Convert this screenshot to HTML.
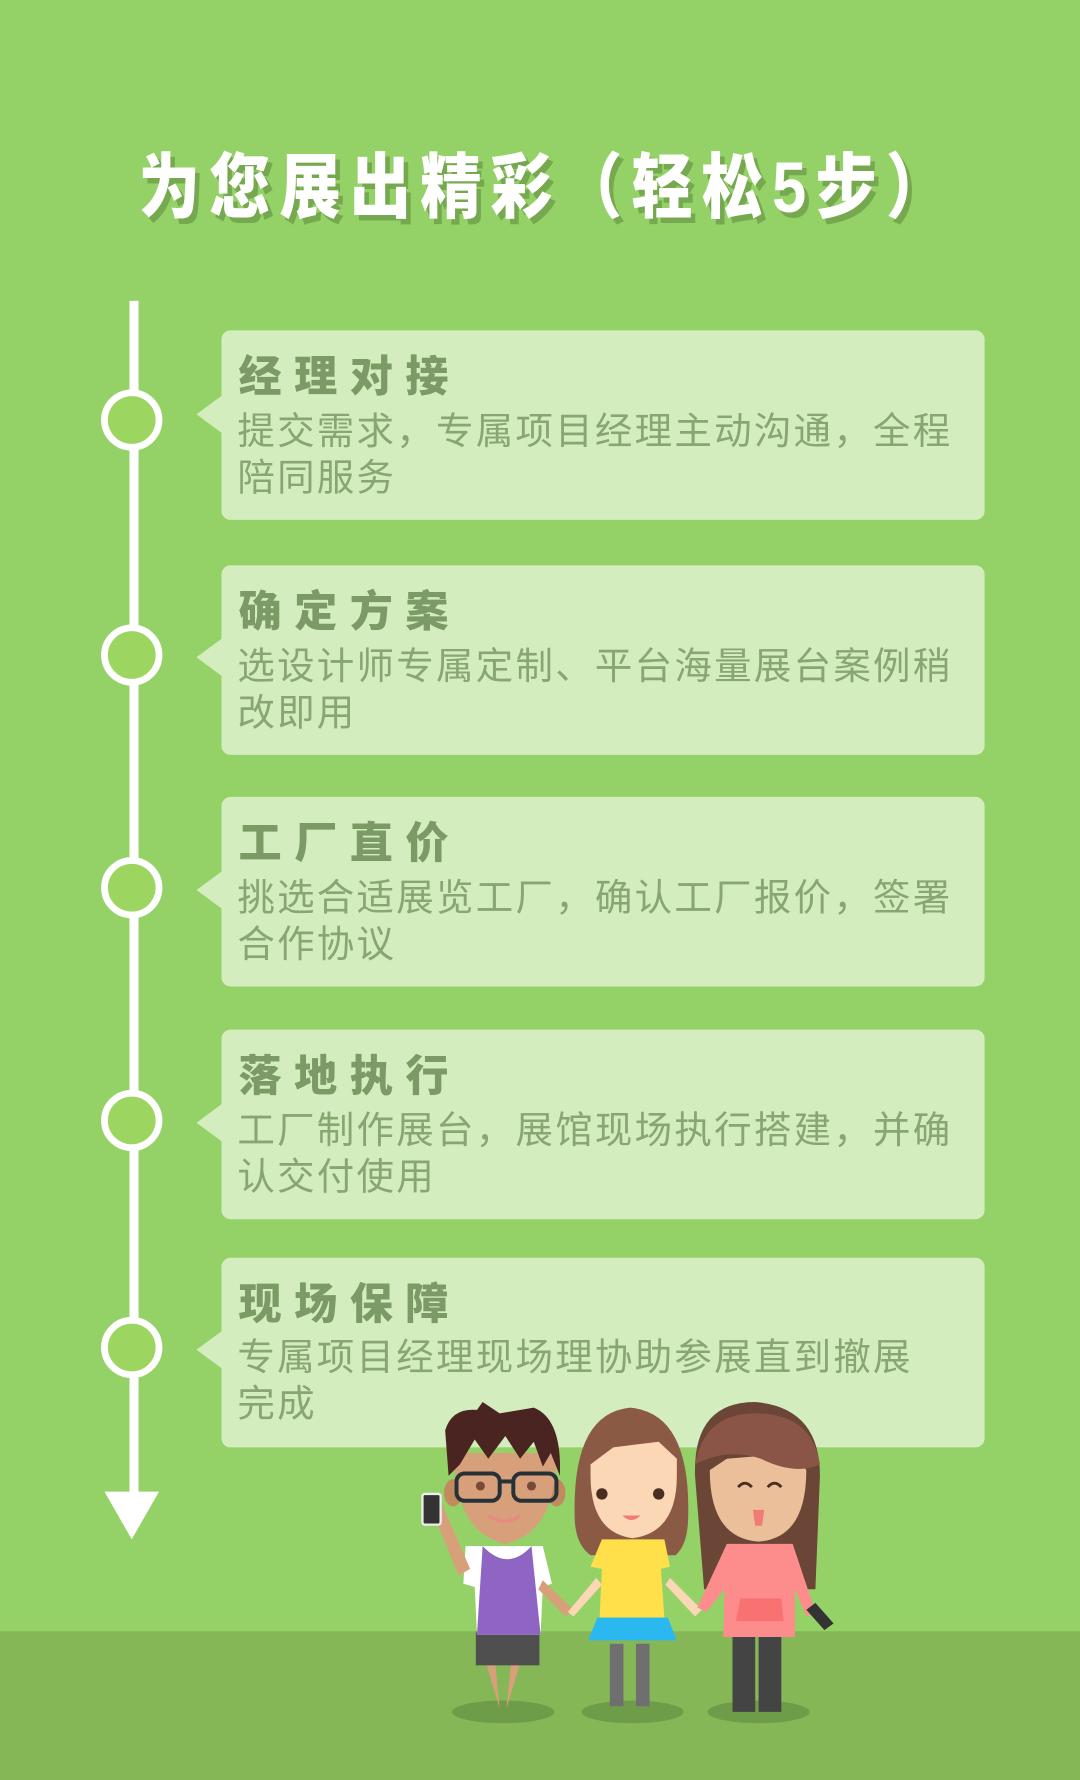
<!DOCTYPE html>
<html><head><meta charset="utf-8"><style>
html,body{margin:0;padding:0;background:#94d268;}
svg{display:block}
text{font-family:"Liberation Sans","Noto Sans CJK SC",sans-serif;}
</style></head><body>
<svg width="1080" height="1780" viewBox="0 0 951 1568" preserveAspectRatio="none" xmlns="http://www.w3.org/2000/svg">
<rect width="951" height="1568" fill="#94d268"/>
<rect y="1437" width="951" height="131" fill="#86b757"/>
<!-- title -->
<g font-size="54" font-weight="900" text-anchor="middle" letter-spacing="8">
<text x="486" y="191" fill="#76a94f" transform="translate(0,-30) scale(1,1.16)">为您展出精彩（轻松5步）</text>
<text x="482" y="187" fill="#ffffff" transform="translate(0,-30) scale(1,1.16)">为您展出精彩（轻松5步）</text>
</g>
<!-- timeline -->
<rect x="114" y="265" width="8" height="1055" fill="#fff"/>
<polygon points="92,1314 140,1314 116,1356" fill="#fff"/>
<g fill="#9dd561" stroke="#fff" stroke-width="6">
<circle cx="116" cy="370" r="24"/>
<circle cx="116" cy="577" r="24"/>
<circle cx="116" cy="782" r="24"/>
<circle cx="116" cy="987" r="24"/>
<circle cx="116" cy="1187" r="24"/>
</g>
<!-- cards -->
<g fill="#d3edbe">
<rect x="195" y="291" width="672" height="167" rx="8"/><polygon points="196,348 173,365 196,382"/>
<rect x="195" y="498" width="672" height="167" rx="8"/><polygon points="196,562 173,579 196,596"/>
<rect x="195" y="702" width="672" height="167" rx="8"/><polygon points="196,767 173,784 196,801"/>
<rect x="195" y="907" width="672" height="167" rx="8"/><polygon points="196,972 173,989 196,1006"/>
<rect x="195" y="1108" width="672" height="167" rx="8"/><polygon points="196,1172 173,1189 196,1206"/>
</g>
<g font-size="38" font-weight="900" fill="#7b9a65" letter-spacing="11">
<text x="210" y="345">经理对接</text>
<text x="210" y="552">确定方案</text>
<text x="210" y="756">工厂直价</text>
<text x="210" y="961">落地执行</text>
<text x="210" y="1162">现场保障</text>
</g>
<g font-size="33" fill="#88a672" letter-spacing="2">
<text x="209" y="391">提交需求，专属项目经理主动沟通，全程</text>
<text x="209" y="432">陪同服务</text>
<text x="209" y="598">选设计师专属定制、平台海量展台案例稍</text>
<text x="209" y="639">改即用</text>
<text x="209" y="802">挑选合适展览工厂，确认工厂报价，签署</text>
<text x="209" y="843">合作协议</text>
<text x="209" y="1007">工厂制作展台，展馆现场执行搭建，并确</text>
<text x="209" y="1048">认交付使用</text>
<text x="209" y="1207">专属项目经理现场理协助参展直到撤展</text>
<text x="209" y="1248">完成</text>
</g>
<!-- shadows -->
<g fill="#6e9c48">
<ellipse cx="443" cy="1508" rx="45" ry="10"/>
<ellipse cx="557" cy="1508" rx="45" ry="10"/>
<ellipse cx="668" cy="1508" rx="45" ry="10"/>
</g>
<!-- boy -->
<g>
<polygon points="428,1465 436,1465 440,1505" fill="#d8a07a"/>
<polygon points="450,1465 458,1465 446,1505" fill="#d8a07a"/>
<rect x="419" y="1437" width="56" height="30" fill="#4f4f4f"/>
<path d="M410,1362 L478,1362 L486,1395 L478,1398 L476,1440 L420,1440 L418,1398 L408,1395Z" fill="#fff"/>
<path d="M425,1362 Q447,1385 468,1362 L476,1440 L420,1440Z" fill="#8e65c2"/>
<path d="M478,1392 L505,1418 L498,1424 L474,1400Z" fill="#d8a07a"/>
<path d="M378,1325 L388,1322 L414,1382 L404,1388Z" fill="#d8a07a"/>
<rect x="372" y="1316" width="16" height="27" rx="2" fill="#333" stroke="#eee" stroke-width="2"/>
<ellipse cx="399" cy="1315" rx="8" ry="12" fill="#c38a60"/>
<ellipse cx="490" cy="1315" rx="8" ry="12" fill="#c38a60"/>
<path d="M400,1280 Q400,1350 445,1360 Q490,1350 490,1280Z" fill="#d8a07a"/>
<path d="M395,1300 L392,1260 Q398,1240 420,1242 L425,1235 L440,1245 L470,1240 Q495,1250 493,1300 L485,1280 L478,1292 L470,1270 L458,1285 L445,1265 L430,1285 L418,1268 L405,1290Z" fill="#4a2420"/>
<g fill="none" stroke="#263238" stroke-width="3.5"><rect x="402" y="1298" width="38" height="24" rx="7"/><rect x="452" y="1298" width="38" height="24" rx="7"/><line x1="440" y1="1305" x2="452" y2="1305"/></g>
<circle cx="423" cy="1309" r="4" fill="#7a4a38"/><circle cx="468" cy="1309" r="4" fill="#7a4a38"/>
<path d="M430,1335 Q445,1345 458,1335" stroke="#e88a80" stroke-width="3" fill="none"/>
</g>
<!-- girl 1 -->
<g>
<rect x="537" y="1448" width="12" height="55" fill="#6f6f6f"/>
<rect x="560" y="1448" width="12" height="55" fill="#6f6f6f"/>
<path d="M506,1335 Q504,1245 555,1240 Q608,1245 606,1335 Q606,1360 595,1370 L520,1370 Q506,1360 506,1335Z" fill="#8a5a45"/>
<path d="M520,1300 Q520,1350 557,1355 Q596,1350 596,1300 L596,1285 L580,1270 L540,1275 L520,1290Z" fill="#fcd7b6"/>
<circle cx="530" cy="1316" r="5" fill="#4b2e22"/><circle cx="580" cy="1316" r="5" fill="#4b2e22"/>
<path d="M548,1335 Q556,1343 564,1335Z" fill="#ef7c76"/>
<path d="M500,1420 L525,1390 L530,1396 L505,1424Z" fill="#fcd7b6"/>
<path d="M590,1390 L618,1418 L612,1424 L586,1396Z" fill="#fcd7b6"/>
<path d="M530,1356 L585,1356 L590,1380 L582,1382 L585,1425 L528,1425 L530,1382 L520,1380Z" fill="#ffdf4a"/>
<path d="M518,1445 L526,1425 L588,1425 L596,1445Z" fill="#2bb7ef"/>
</g>
<!-- girl 2 -->
<g>
<rect x="645" y="1440" width="20" height="68" fill="#444"/>
<rect x="668" y="1440" width="20" height="68" fill="#444"/>
<path d="M612,1300 Q610,1235 665,1235 Q722,1240 722,1300 L718,1400 L620,1400Z" fill="#6b4535"/>
<path d="M625,1295 Q625,1355 668,1358 Q710,1355 710,1295 L700,1280 L640,1285Z" fill="#eabf9a"/>
<path d="M612,1290 Q620,1245 665,1245 Q715,1245 722,1290 Q700,1300 670,1285 Q640,1275 612,1290Z" fill="#8a5547"/>
<path d="M650,1310 Q656,1303 662,1310 M676,1310 Q682,1303 688,1310" stroke="#4b2e22" stroke-width="2.5" fill="none"/>
<path d="M663,1330 L673,1330 L671,1344 L665,1344Z" fill="#ef7c76"/>
<path d="M640,1360 L698,1360 L718,1420 L710,1424 L700,1400 L700,1442 L637,1442 L638,1400 L622,1420 L614,1416Z" fill="#fd8c8c"/>
<path d="M652,1408 L688,1408 L690,1428 L648,1428Z" fill="#f97272"/>
<path d="M710,1418 L718,1412 L734,1430 L726,1436Z" fill="#333"/>
</g>
</svg>
</body></html>
